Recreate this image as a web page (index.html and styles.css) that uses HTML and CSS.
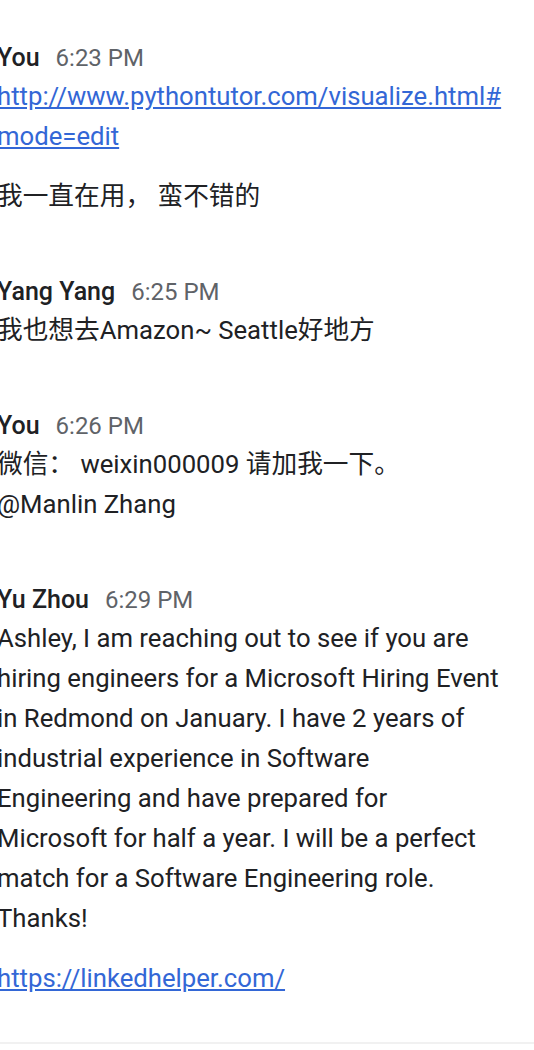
FILE: index.html
```html
<!DOCTYPE html>
<html>
<head>
<meta charset="utf-8">
<link rel="stylesheet" href="styles.css">
</head>
<body>
<div class="thread">
  <div class="msg">
    <div class="head"><span class="name">You</span><span class="time">6:23 PM</span></div>
    <p class="text"><a href="#">http://www.pythontutor.com/visualize.html#<br>mode=edit</a></p>
    <p class="text">我一直在用， 蛮不错的</p>
  </div>
  <div class="msg">
    <div class="head"><span class="name">Yang Yang</span><span class="time">6:25 PM</span></div>
    <p class="text">我也想去Amazon~ Seattle好地方</p>
  </div>
  <div class="msg">
    <div class="head"><span class="name">You</span><span class="time">6:26 PM</span></div>
    <p class="text">微信： weixin000009 请加我一下。<br>@Manlin Zhang</p>
  </div>
  <div class="msg">
    <div class="head"><span class="name">Yu Zhou</span><span class="time">6:29 PM</span></div>
    <p class="text">Ashley, I am reaching out to see if you are hiring engineers for a Microsoft Hiring Event in Redmond on January. I have 2 years of industrial experience in Software Engineering and have prepared for Microsoft for half a year. I will be a perfect match for a Software Engineering role. Thanks!</p>
    <p class="text"><a href="#">https://linkedhelper.com/</a></p>
  </div>
</div>
<div class="divider"></div>
</body>
</html>
```
FILE: styles.css
```css
html, body {
  margin: 0;
  padding: 0;
  background: #ffffff;
}
body {
  font-family: Roboto, "Noto Sans CJK SC", sans-serif;
  color: #202124;
  width: 534px;
  overflow: hidden;
}
.thread {
  padding: 38px 0 0 0;
  margin-left: -3px;
  width: 505px;
  height: 1042px;
  box-sizing: border-box;
}
.msg {
  margin-bottom: 56px;
}
.head {
  display: flex;
  align-items: baseline;
  gap: 16px;
  height: 38px;
  padding-top: 1px;
  box-sizing: border-box;
  line-height: 37px;
}
.name {
  font-size: 25px;
  font-weight: 500;
  color: #202124;
}
.time {
  font-size: 24px;
  color: #5f6368;
}
.text {
  margin: 0;
  font-size: 25.7px;
  line-height: 40px;
  color: #202124;
}
.text + .text {
  margin-top: 20px;
}
.text a {
  color: #3367d6;
  text-decoration: underline;
}
.divider {
  height: 2px;
  background: #f1f1f1;
}
```
